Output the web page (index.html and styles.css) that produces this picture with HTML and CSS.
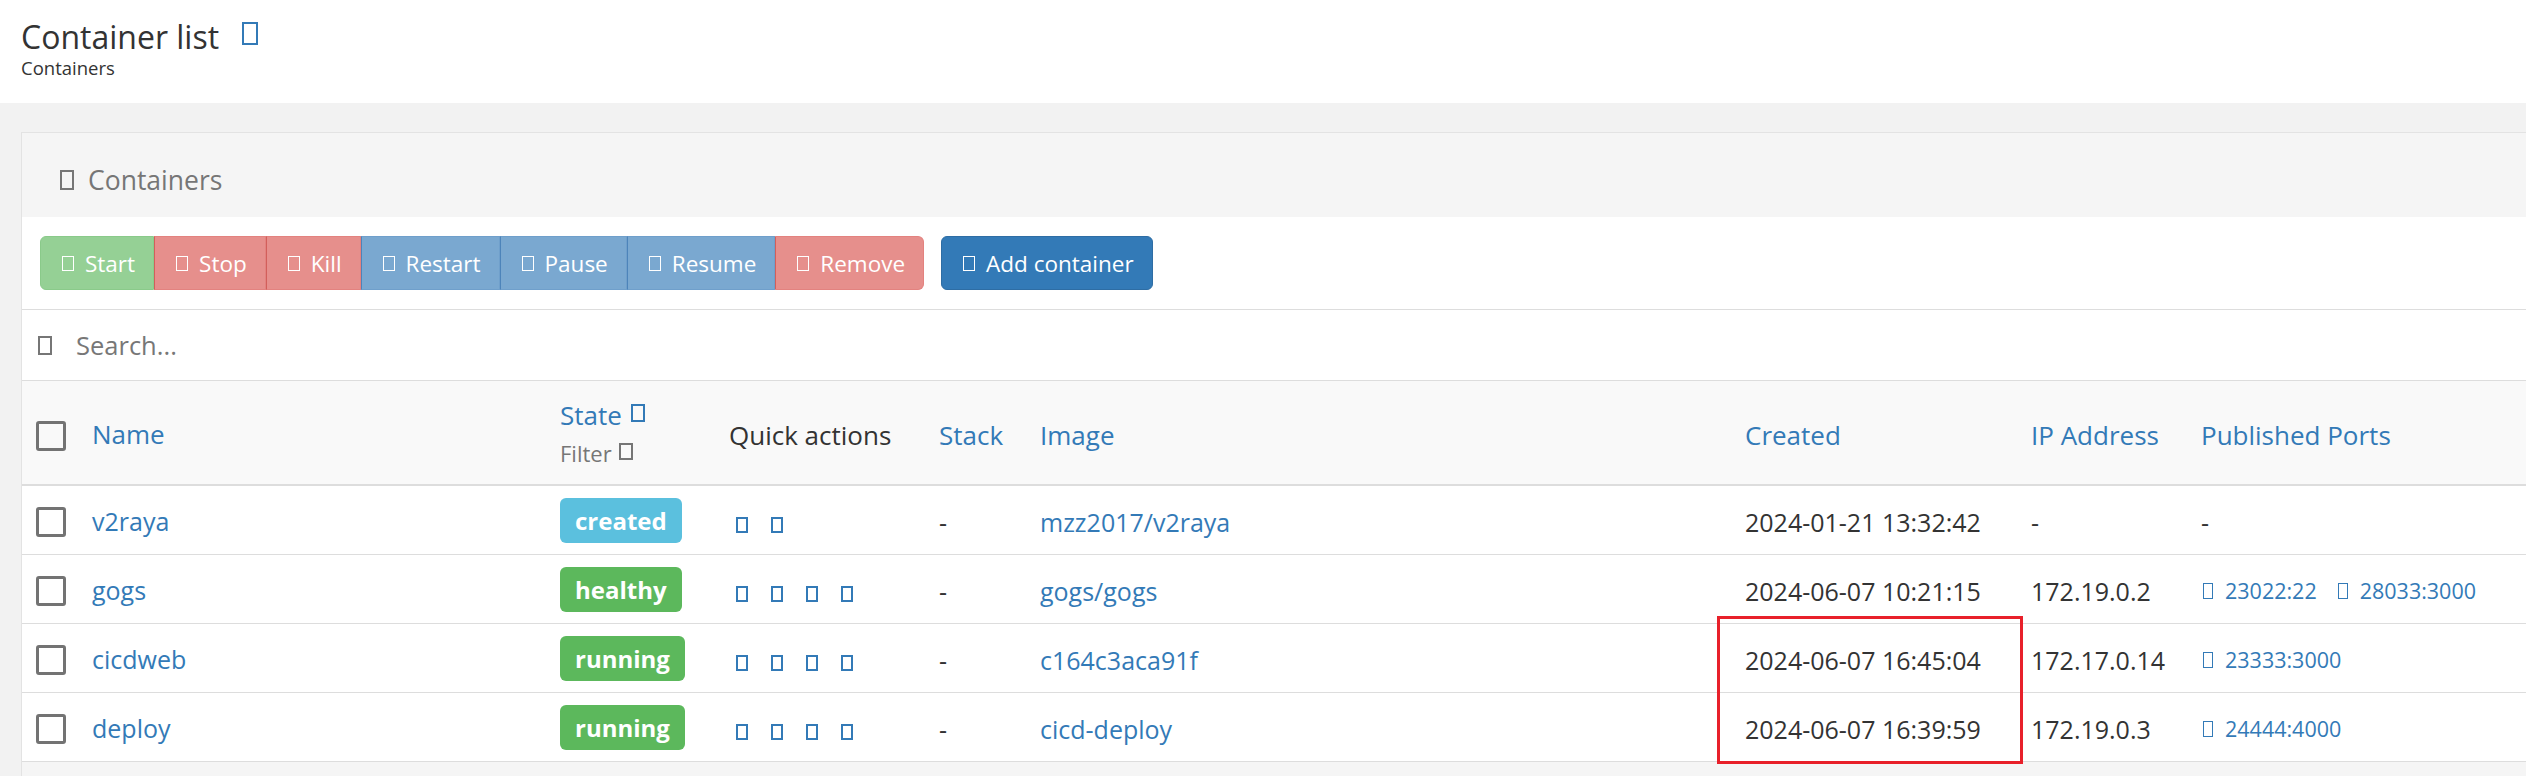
FILE: index.html
```html
<!DOCTYPE html>
<html lang="en">
<head>
<meta charset="utf-8">
<title>Container list</title>
<link rel="stylesheet" href="styles.css">
</head>
<body>
<header class="page-header">
  <div class="title">Container list <span class="ico ico-title"></span></div>
  <div class="crumb">Containers</div>
</header>

<section class="panel">
  <div class="panel-head"><span class="ico ico-ph"></span>Containers</div>

  <div class="toolbar">
    <div class="btn-group">
      <button class="btn success"><span class="ico ico-btn"></span>Start</button>
      <button class="btn danger"><span class="ico ico-btn"></span>Stop</button>
      <button class="btn danger"><span class="ico ico-btn"></span>Kill</button>
      <button class="btn primary"><span class="ico ico-btn"></span>Restart</button>
      <button class="btn primary"><span class="ico ico-btn"></span>Pause</button>
      <button class="btn primary"><span class="ico ico-btn"></span>Resume</button>
      <button class="btn danger"><span class="ico ico-btn"></span>Remove</button>
    </div>
    <button class="btn add"><span class="ico ico-btn"></span>Add container</button>
  </div>

  <div class="search"><span class="ico ico-search"></span><span class="placeholder">Search...</span></div>

  <table class="tbl">
    <colgroup>
      <col class="c-name"><col class="c-state"><col class="c-qa"><col class="c-stack">
      <col class="c-image"><col class="c-created"><col class="c-ip"><col class="c-ports">
    </colgroup>
    <thead>
      <tr>
        <th class="first"><span class="cb"></span><a class="lnk">Name</a></th>
        <th>
          <div class="st-line"><a class="lnk">State</a> <span class="ico ico-hd"></span></div>
          <div class="filter-line">Filter <span class="ico ico-filter"></span></div>
        </th>
        <th class="plain">Quick actions</th>
        <th><a class="lnk">Stack</a></th>
        <th><a class="lnk">Image</a></th>
        <th><a class="lnk">Created</a></th>
        <th><a class="lnk">IP Address</a></th>
        <th><a class="lnk">Published Ports</a></th>
      </tr>
    </thead>
    <tbody>
      <tr>
        <td class="first"><span class="cb"></span><a class="lnk">v2raya</a></td>
        <td><span class="badge info">created</span></td>
        <td><span class="qa"><span class="ico ico-qa"></span><span class="ico ico-qa"></span></span></td>
        <td>-</td>
        <td><a class="lnk">mzz2017/v2raya</a></td>
        <td>2024-01-21 13:32:42</td>
        <td>-</td>
        <td>-</td>
      </tr>
      <tr>
        <td class="first"><span class="cb"></span><a class="lnk">gogs</a></td>
        <td><span class="badge ok">healthy</span></td>
        <td><span class="qa"><span class="ico ico-qa"></span><span class="ico ico-qa"></span><span class="ico ico-qa"></span><span class="ico ico-qa"></span></span></td>
        <td>-</td>
        <td><a class="lnk">gogs/gogs</a></td>
        <td>2024-06-07 10:21:15</td>
        <td>172.19.0.2</td>
        <td class="ports"><a class="port"><span class="ico ico-port"></span>23022:22</a><a class="port"><span class="ico ico-port"></span>28033:3000</a></td>
      </tr>
      <tr>
        <td class="first"><span class="cb"></span><a class="lnk">cicdweb</a></td>
        <td><span class="badge ok">running</span></td>
        <td><span class="qa"><span class="ico ico-qa"></span><span class="ico ico-qa"></span><span class="ico ico-qa"></span><span class="ico ico-qa"></span></span></td>
        <td>-</td>
        <td><a class="lnk">c164c3aca91f</a></td>
        <td>2024-06-07 16:45:04</td>
        <td>172.17.0.14</td>
        <td class="ports"><a class="port"><span class="ico ico-port"></span>23333:3000</a></td>
      </tr>
      <tr>
        <td class="first"><span class="cb"></span><a class="lnk">deploy</a></td>
        <td><span class="badge ok">running</span></td>
        <td><span class="qa"><span class="ico ico-qa"></span><span class="ico ico-qa"></span><span class="ico ico-qa"></span><span class="ico ico-qa"></span></span></td>
        <td>-</td>
        <td><a class="lnk">cicd-deploy</a></td>
        <td>2024-06-07 16:39:59</td>
        <td>172.19.0.3</td>
        <td class="ports"><a class="port"><span class="ico ico-port"></span>24444:4000</a></td>
      </tr>
    </tbody>
  </table>
  <div class="panel-foot"></div>
</section>

<div class="annot"></div>
</body>
</html>
```

FILE: styles.css
```css
html, body {
  margin: 0;
  padding: 0;
  overflow: hidden;
}
body {
  background: #f2f2f2;
  font-family: "Open Sans", "Noto Sans", sans-serif;
  color: #333;
  position: relative;
  width: 2526px;
  height: 776px;
}

/* icons (rendered as empty glyph boxes) */
.ico {
  display: inline-block;
  box-sizing: border-box;
  border: 2px solid currentColor;
  vertical-align: middle;
}

.page-header {
  background: #fff;
  height: 103px;
  box-sizing: border-box;
  padding: 16px 0 0 21px;
}
.title {
  font-size: 32px;
  line-height: 41px;
  color: #333;
  display: flex;
  align-items: center;
}
.ico-title {
  width: 16px;
  height: 23px;
  color: #337ab7;
  margin-left: 23px;
  margin-top: -7px;
}
.crumb {
  font-size: 18.5px;
  line-height: 24px;
  margin-top: -1px;
  color: #333;
}

.panel {
  margin: 29px 0 0 21px;
  width: 2600px;
  border-top: 1px solid #e3e3e3;
  border-left: 1px solid #e3e3e3;
  background: #fff;
}
.panel-head {
  background: #f5f5f5;
  height: 84px;
  box-sizing: border-box;
  padding: 34px 0 0 38px;
  font-size: 26.5px;
  line-height: 27px;
  color: #767676;
  display: flex;
  align-items: flex-start;
}
.ico-ph {
  width: 14px;
  height: 20px;
  color: #767676;
  margin: 3px 14px 0 0;
}

.toolbar {
  display: flex;
  align-items: center;
  padding: 19px 0 19px 18px;
  border-bottom: 1px solid #ddd;
}
.btn-group {
  display: flex;
}
.btn {
  font-family: inherit;
  font-size: 22.5px;
  height: 54px;
  box-sizing: border-box;
  padding: 0 18px 0 21px;
  color: #fff;
  border: 1px solid transparent;
  display: flex;
  align-items: center;
  border-radius: 0;
  cursor: pointer;
}
.ico-btn {
  width: 12px;
  height: 15px;
  border-width: 1.5px;
  color: #fff;
  margin-right: 11px;
}
.btn.success { background: #95d095; border-color: #8aca8a; }
.btn.danger  { background: #e68f8c; border-color: #e3827f; border-left-color: #d25f5b; }
.btn.primary { background: #7aa8d0; border-color: #6f9fcb; border-left-color: #4d84ba; }
.btn-group .btn:first-child { border-radius: 6px 0 0 6px; }
.btn-group .btn:last-child { border-radius: 0 6px 6px 0; }
.btn.add {
  background: #337ab7;
  border-color: #2e6da4;
  border-radius: 6px;
  margin-left: 17px;
}

.search {
  height: 71px;
  box-sizing: border-box;
  border-bottom: 1px solid #ddd;
  display: flex;
  align-items: center;
  padding-left: 16px;
}
.ico-search {
  width: 14px;
  height: 19px;
  color: #767676;
  margin-right: 24px;
}
.placeholder {
  font-size: 25.5px;
  color: #777;
}

.tbl {
  table-layout: fixed;
  border-collapse: separate;
  border-spacing: 0;
  width: 2567px;
  font-size: 25px;
}
.c-name { width: 526px; }
.c-state { width: 169px; }
.c-qa { width: 210px; }
.c-stack { width: 101px; }
.c-image { width: 705px; }
.c-created { width: 286px; }
.c-ip { width: 170px; }
.c-ports { width: 400px; }

.tbl th {
  background: #f9f9f9;
  height: 99px;
  border-bottom: 2px solid #ddd;
  text-align: left;
  font-weight: 400;
  font-size: 26px;
  line-height: 36px;
  padding: 4px 0 0 12px;
  vertical-align: middle;
  white-space: nowrap;
}
.tbl th.first, .tbl td.first { padding-left: 14px; }
.tbl th.plain { color: #333; }
.lnk { color: #337ab7; text-decoration: none; }

.st-line { line-height: 36px; display: flex; align-items: center; }
.ico-hd {
  width: 14px;
  height: 18px;
  color: #337ab7;
  margin-left: 9px;
  margin-top: -4px;
}
.filter-line {
  font-size: 22px;
  line-height: 40px;
  color: #767676;
  display: flex;
  align-items: center;
}
.ico-filter {
  width: 14px;
  height: 17px;
  color: #767676;
  margin-left: 7px;
  margin-top: -2px;
}

.tbl td {
  height: 65px;
  padding: 3px 0 0 12px;
  border-bottom: 1px solid #ddd;
  vertical-align: middle;
  white-space: nowrap;
  background: #fff;
}

.cb {
  display: inline-block;
  box-sizing: border-box;
  width: 30px;
  height: 30px;
  border: 3px solid #737373;
  border-radius: 3px;
  vertical-align: middle;
  margin-right: 26px;
  position: relative;
  top: -2px;
}

.badge {
  display: inline-block;
  font-size: 24px;
  font-weight: 700;
  color: #fff;
  line-height: 45px;
  height: 45px;
  padding: 0 15px;
  border-radius: 6px;
  position: relative;
  top: -1px;
}
.badge.info { background: #5bc0de; }
.badge.ok { background: #5cb85c; }

.qa {
  display: inline-flex;
  gap: 23px;
  margin-left: 7px;
  vertical-align: middle;
}
.ico-qa {
  width: 12px;
  height: 16px;
  color: #337ab7;
}

.ports { font-size: 21.5px; }
.port {
  color: #337ab7;
  margin-right: 19px;
  display: inline-flex;
  align-items: center;
}
.ico-port {
  width: 10px;
  height: 16px;
  border-width: 1.5px;
  color: #337ab7;
  margin: 0 12px 0 2px;
}

.panel-foot {
  background: #f5f5f5;
  height: 40px;
}

.annot {
  position: absolute;
  left: 1717px;
  top: 616px;
  width: 306px;
  height: 148px;
  box-sizing: border-box;
  border: 3px solid #e8202a;
}
```
